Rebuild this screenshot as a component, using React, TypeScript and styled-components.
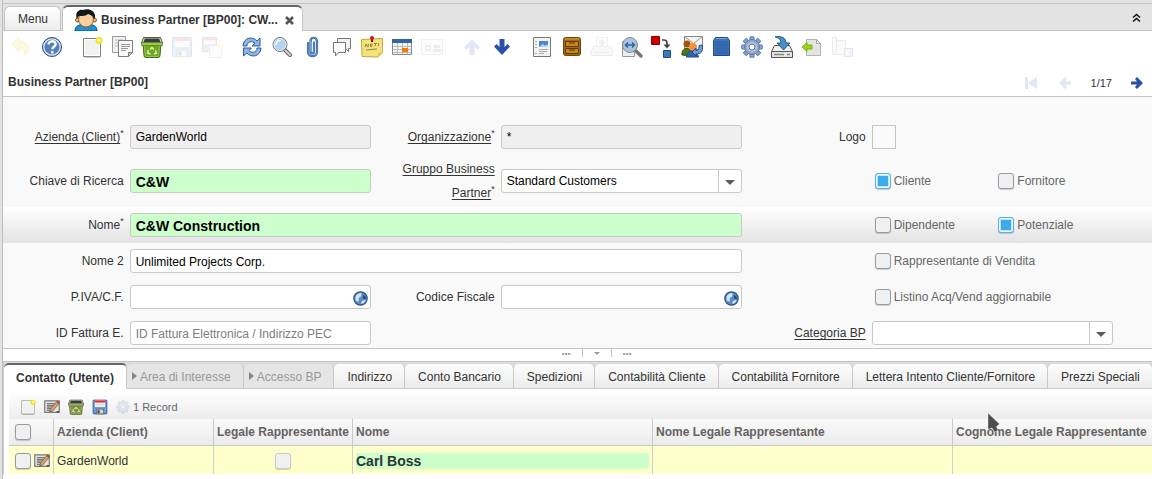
import React from "react";
import styled, { createGlobalStyle, css } from "styled-components";

const LINE = "#c4c4c4";
const FONT = '"Liberation Sans", Arial, Helvetica, sans-serif';

const GlobalStyle = createGlobalStyle`
  *, *::before, *::after { box-sizing: border-box; }
  body { margin: 0; background: #fff; overflow-x: hidden; }
  body, button, input, select, table { font-family: ${FONT}; font-size: 12px; color: #333; }
  button { border: 0; padding: 0; background: none; cursor: pointer; }
  svg { display: block; }
`;

/* ---------- page frame ---------- */

const Page = styled.div`
  display: flex;
  min-height: 100vh;
  overflow: hidden;
`;
const Gutter = styled.aside`
  flex: none;
  width: 3px;
  background: #e3e3e3;
  border-right: 1px solid #bdbdbd;
`;
const Main = styled.main`
  flex: 1;
  min-width: 0;
`;

/* ---------- window tabs ---------- */

const WindowBar = styled.header`
  border-top: 3px solid #e3e3e3;
  background: #e3e3e3;
`;
const WindowTabs = styled.nav`
  display: flex;
  align-items: flex-end;
  height: 28px;
  padding: 0 2px 0 1px;
  border-top: 1px solid ${LINE};
  border-bottom: 1px solid ${LINE};
`;
const WindowTab = styled.button<{ $active?: boolean }>`
  display: flex;
  align-items: center;
  border: 1px solid ${LINE};
  border-bottom: 0;
  border-radius: 6px 6px 0 0;
  white-space: nowrap;
  ${(p) =>
    p.$active
      ? css`
          height: 26px;
          margin-bottom: -1px;
          padding: 2px 8px 0 11px;
          border-top: 2px solid #666;
          background: #fff;
          font-weight: bold;
          gap: 3px;
        `
      : css`
          height: 24px;
          padding: 0 12px 0 13px;
          margin-right: 1px;
          background: linear-gradient(#fefefe, #ececec);
        `}
`;
const TabClose = styled.span`
  padding-left: 4px;
`;
const CollapseButton = styled.button`
  margin-left: auto;
  align-self: center;
  padding: 4px 9px;
`;

/* ---------- main toolbar ---------- */

const Toolbar = styled.div`
  display: flex;
  align-items: center;
  height: 32px;
  padding-left: 4px;
`;
const ToolGroup = styled.div`
  display: flex;
  margin-right: 10px;
`;
const ToolButton = styled.button`
  width: 30px;
  height: 30px;
  display: grid;
  place-items: center;
  &:disabled { opacity: 0.13; cursor: default; }
`;

const TitleRow = styled.div`
  display: flex;
  align-items: center;
  justify-content: space-between;
  height: 34px;
  padding: 4px 9px 0 5px;
  border-bottom: 1px solid ${LINE};
`;
const Title = styled.h1`
  margin: 0;
  font-size: 12px;
  line-height: 16px;
`;
const Pager = styled.div`
  display: flex;
  align-items: center;
  padding-top: 2px;
  font-size: 11px;
`;
const PagerButton = styled.button`
  padding: 0 11px;
  &:disabled { opacity: 0.13; }
  &:last-child { padding: 0 0 0 11px; }
`;
const PagerCount = styled.span`
  padding: 0 8px 0 9px;
`;

/* ---------- form ---------- */

const Form = styled.form`
  padding-top: 22px;
  background: #f9f9f9;
  border-bottom: 1px solid ${LINE};
`;
const FormRow = styled.div<{ $current?: boolean }>`
  display: grid;
  grid-template-columns: repeat(9, minmax(0, 1fr));
  align-items: center;
  min-height: 36px;
  padding: 2px 36px 2px 0;
  background: ${(p) => (p.$current ? "linear-gradient(#fff, #e3e3e3)" : "none")};
  &:last-child { min-height: 33px; padding: 6px 36px 3px 0; }
`;
const Cell = styled.div<{ $col: number; $span?: number }>`
  grid-column: ${(p) => p.$col} / span ${(p) => p.$span ?? 1};
  min-width: 0;
  padding: 0 3px;
`;
const FieldLabel = styled.label<{ $zoom?: boolean }>`
  display: block;
  text-align: right;
  line-height: 24px;
  & > span { text-decoration: ${(p) => (p.$zoom ? "underline" : "none")}; text-underline-offset: 2px; }
`;
const Required = styled.sup`
  font-size: 9px;
  line-height: 0;
`;
const boxed = css`
  display: block;
  width: 100%;
  height: 24px;
  border: 1px solid #c8c8c8;
  border-radius: 3px;
  background: #fff;
`;
const TextBox = styled.input<{ $key?: boolean }>`
  ${boxed}
  padding: 1px 5px 0;
  color: #000;
  outline: 0;
  &[readonly] { background: #efefef; padding-bottom: 1px; padding-top: 0; }
  &::placeholder { color: #7d7d7d; }
  ${(p) => p.$key && css`background: #ccffcc; font-size: 14px; font-weight: bold;`}
`;
const WithGlobe = styled.div`
  ${boxed}
  display: flex;
  align-items: center;
  padding: 2px 2px 0 0;
`;
const BareInput = styled.input`
  flex: 1;
  min-width: 0;
  border: 0;
  outline: 0;
  padding: 0 5px;
  background: none;
`;
const SelectWrap = styled.div`
  ${boxed}
  display: grid;
  grid-template-rows: 22px;
`;
const Select = styled.select`
  grid-area: 1 / 1;
  width: 100%;
  appearance: none;
  border: 0;
  outline: 0;
  padding: 0 28px 0 5px;
  background: none;
  color: #000;
`;
const SelectArrow = styled.span`
  grid-area: 1 / 1;
  justify-self: end;
  width: 23px;
  padding-top: 2px;
  border-left: 1px solid #c8c8c8;
  display: grid;
  place-items: center;
  pointer-events: none;
`;
const LogoButton = styled.button`
  display: block;
  width: 24px;
  height: 24px;
  border: 1px solid #c4c4c4;
`;
const CheckLabel = styled.label`
  display: flex;
  align-items: center;
  gap: 3px;
  padding-left: 3px;
  color: #666;
  white-space: nowrap;
`;
const CheckBox = styled.input<{ $faint?: boolean }>`
  appearance: none;
  flex: none;
  display: block;
  width: 16px;
  height: 16px;
  margin: 0;
  border: 1px solid ${(p) => (p.$faint ? "#c9c9cc" : "#999a9e")};
  border-radius: 3px;
  background: #eef0f2;
  box-shadow: 0 1px 1px rgba(0, 0, 0, 0.18);
  &:checked {
    border-color: #4fb3ea;
    background: #3cabea;
    box-shadow: inset 0 0 0 1px #f4fafe, inset 0 0 0 2px #c3e4f7, 0 1px 1px rgba(0, 0, 0, 0.18);
  }
`;

/* ---------- splitter and detail ---------- */

const Splitter = styled.div`
  display: flex;
  justify-content: center;
  height: 13px;
  padding-left: 39px;
  border-bottom: 1px solid ${LINE};
`;
const Grip = styled.span`
  width: 9px;
  height: 2px;
  margin: 4px 11px;
  background: repeating-linear-gradient(90deg, #aaa 0 2px, #ddd 2px 3px);
`;
const SplitButton = styled.button`
  width: 30px;
  height: 8px;
  border: solid #c4c4c4;
  border-width: 0 1px;
  display: grid;
  place-items: center;
`;
const Detail = styled.section`
  border-left: 1px solid #ccc;
`;
const DetailTabs = styled.nav`
  display: flex;
  align-items: flex-end;
  height: 27px;
  background: #dcdcdc;
  border-bottom: 1px solid #c8c8c8;
`;
const DetailTab = styled.button<{ $active?: boolean }>`
  flex: none;
  display: flex;
  align-items: center;
  gap: 3px;
  height: 24px;
  padding: 2px 12px 0 13px;
  border: 1px solid #c8c8c8;
  border-width: 0 1px 0 0;
  border-radius: 5px 5px 0 0;
  background: linear-gradient(#fdfdfd, #ececec);
  white-space: nowrap;
  &:disabled { background: #e5e5e5; color: #999; padding-left: 5px; }
  ${(p) =>
    p.$active &&
    css`
      height: 26px;
      margin-bottom: -1px;
      padding: 2px 12px 0;
      border-top: 2px solid #666;
      background: #fff;
      font-weight: bold;
    `}
`;
const Records = styled.div`
  padding: 3px 0 0 5px;
`;
const RecordBar = styled.div`
  display: flex;
  align-items: center;
  height: 27px;
  padding: 2px 0 0 7px;
  background: linear-gradient(#fff, #ececec);
  color: #666;
  font-size: 11px;
`;
const SmallTool = styled.button`
  width: 24px;
  height: 24px;
  display: grid;
  place-items: center;
  &:disabled { opacity: 0.22; width: 21px; }
`;
const RecordTable = styled.table`
  width: 100%;
  table-layout: fixed;
  border-collapse: separate;
  border-spacing: 0;
`;
const HeadCell = styled.th`
  position: relative;
  height: 27px;
  padding: 0 3px;
  border: solid #c8c8cc;
  border-width: 0 1px 1px 0;
  background: linear-gradient(#fafafa, #ebebeb);
  color: #636363;
  text-align: left;
  white-space: nowrap;
  &:last-child { border-right: 0; }
`;
const DataCell = styled.td`
  height: 28px;
  padding: 1px 3px 0;
  border-right: 1px solid #cfcfcf;
  background: #ffffcc;
  &:last-child { border-right: 0; }
`;
const CellTools = styled.div<{ $center?: boolean }>`
  display: flex;
  align-items: center;
  gap: 3px;
  padding-left: ${(p) => (p.$center ? "0" : "3px")};
  justify-content: ${(p) => (p.$center ? "center" : "flex-start")};
`;
const KeyValue = styled.div`
  background: #ccffcc;
  font-size: 14px;
  line-height: 16px;
  font-weight: bold;
`;
const Pointer = styled.svg`
  position: absolute;
  left: 34px;
  top: -7px;
  z-index: 1;
`;

/* ---------- icons ---------- */

const Icon = ({ children, size = 22 }: { children: React.ReactNode; size?: number }) => (
  <svg width={size} height={size} viewBox="0 0 22 22" fill="none" aria-hidden="true">
    {children}
  </svg>
);

const GEAR = Array.from({ length: 8 }, (_, i) => i * 45);

const drawBin = (body: string, edge: string, band: string) => (
  <>
    <path d="M2 7h18l-1 12.500q0 2-2 2H5q-2 0-2-2Z" fill={body} stroke={edge} />
    <path d="M3.500 9h15l-.8 10.500q0 1-1 1H5.300q-1 0-1-1Z" stroke="#fff" strokeOpacity=".3" />
    <path d="M2.500 1.500h17l2 5.500H.5Z" fill="#d8dad4" stroke="#555" />
    <path d="M3.800 2.500h14.400l1.300 3.500h-17Z" fill="#3a3d3a" />
    <path d="M.5 6.500h21v3H.5Z" fill={band} stroke={edge} strokeWidth=".6" />
    <path d="m9 13.500 2-2 2 2M14.500 14.500l1 2.500-2.500 1M7.500 14 6.500 17l3 1" stroke="#e2f2c4" strokeWidth="1.400" />
  </>
);

const icons = {
  undo: (
    <path d="M1 8 8 1v4c7 0 10 4 9 9-.5 3-2 5-4 6 1-4 1-8-5-8v4Z" fill="#edd400" stroke="#c4a000" />
  ),
  help: (
    <>
      <circle cx="11" cy="11" r="9.500" fill="#5681b8" stroke="#28508a" />
      <circle cx="11" cy="11" r="8.200" stroke="#e6eef8" strokeWidth="1.200" />
      <path d="M7.600 8.600c0-4.400 7-4.200 7-.4 0 2.500-3.300 2.500-3.300 5M11.300 15v2.400" stroke="#fff" strokeWidth="2.400" />
    </>
  ),
  newDoc: (
    <>
      <path d="M2.500 2.500h17v18h-17Z" fill="#f1f1f1" stroke="#7d7f7a" />
      <path d="M3.500 3.500h15v16h-15Z" stroke="#fff" />
      <path d="M4 21h15" stroke="#999" />
      <circle cx="18" cy="4.500" r="3.500" fill="#f2e230" />
      <circle cx="18" cy="4.500" r="1.400" fill="#fffbc8" />
    </>
  ),
  copy: (
    <>
      <path d="M1.500.500h13v16h-13Z" fill="#f1f1f1" stroke="#9a9c97" />
      <path d="M4 4h8M4 7h4M4 10h4" stroke="#bbb" />
      <path d="M7.500 4.500h14v12l-4 4h-10Z" fill="#fafafa" stroke="#7d7f7a" />
      <path d="M10 8.500h9M10 10.500h9M10 12.500h7M10 14.500h5" stroke="#999" />
      <path d="m21.500 16.500-4 4v-4Z" fill="#ccc" stroke="#7d7f7a" />
    </>
  ),
  bin: drawBin("#6fa81c", "#3c6c0c", "#9ccc4a"),
  binMuted: drawBin("#7f9440", "#4c5a24", "#a3b468"),
  save: (
    <>
      <path d="M1.500 2.500q0-1 1-1h17q1 0 1 1v17q0 1-1 1h-17q-1 0-1-1Z" fill="#6d9dd8" stroke="#204a87" />
      <path d="M4 2h14v9H4Z" fill="#fff" />
      <path d="M4 2h14v3H4Z" fill="#ef2929" />
      <path d="M5 7.500h12M5 9.500h12" stroke="#ccc" />
      <path d="M6 14h10v6.500H6Z" fill="#d3d7cf" stroke="#555" />
      <path d="M7.500 15.500h3v4h-3Z" fill="#444" />
    </>
  ),
  saveNew: (
    <>
      <path d="M1.500 1.500h14v14h-14Z" fill="#6d9dd8" stroke="#204a87" />
      <path d="M3 2h11v6H3Z" fill="#fff" />
      <path d="M3 2h11v2.500H3Z" fill="#ef2929" />
      <path d="M8.500 9.500h12v12h-12Z" fill="#eee" stroke="#888" />
      <circle cx="19" cy="11" r="3" fill="#f4e642" />
    </>
  ),
  refresh: (
    <>
      <path d="M2 10c.5-9 10-10 14-5l3-3v8h-8l3-2.600C11 4 6 6 6 10Z" fill="#8db4e3" stroke="#2f5f9f" />
      <path d="M20 12c-.5 9-10 10-14 5l-3.500 3v-8h8L8 14.600c3 3.400 8 1.400 8-2.600Z" fill="#8db4e3" stroke="#2f5f9f" />
    </>
  ),
  find: (
    <>
      <path d="m14 14 5 5" stroke="#666" strokeWidth="4" strokeLinecap="round" />
      <path d="m14.500 14.500 4.500 4.500" stroke="#d3d3d3" strokeWidth="2" strokeLinecap="round" />
      <circle cx="9" cy="8.500" r="7" fill="#b5d3f3" stroke="#777" />
      <circle cx="9" cy="8.500" r="6" stroke="#dde6ee" />
      <path d="M5 9q0-4.500 5-5" stroke="#fff" strokeWidth="1.500" />
    </>
  ),
  attach: (
    <>
      <path
        d="M7 7v9c0 5.500 9 5.500 9 0V5.500c0-5-6.500-5-6.500 0v10c0 2.500 3.500 2.500 3.500 0V6.500"
        stroke="#2f5f9f"
        strokeWidth="2.200"
        strokeLinecap="round"
      />
      <path
        d="M7 7v9c0 5.500 9 5.500 9 0V5.500c0-5-6.500-5-6.500 0v10c0 2.500 3.500 2.500 3.500 0V6.500"
        stroke="#7fa8da"
        strokeWidth=".8"
        strokeLinecap="round"
      />
    </>
  ),
  chat: (
    <>
      <path d="M6.500 2.500h13v10h-2v3l-3-3h-8Z" fill="#f2f2f2" stroke="#777" />
      <path d="M2.500 6.500h12v10h-7l-3 3.500v-3.500h-2Z" fill="#fafafa" stroke="#777" />
    </>
  ),
  note: (
    <>
      <path d="m.5 3.500 21-1 .2 14-4.700 4.500-16-.5Z" fill="#f5e27a" stroke="#c0a93a" />
      <path d="m17 21 .5-4 4-.5Z" fill="#dcc254" />
      <path d="m4 11 1-3 2 3 .500-3M9.500 8v2.500h1.500V8ZM13 7.500h3M14.500 7.500V10M17.500 7v3M5 14l11-1" stroke="#8b7d40" strokeWidth=".9" />
      <path d="M11 1v5" stroke="#a40000" strokeWidth="2" />
      <circle cx="11" cy="2" r="2" fill="#cc1020" />
    </>
  ),
  grid: (
    <>
      <path d="M1.500 3.500h19v15h-19Z" fill="#f4f4f2" stroke="#888a85" />
      <path d="M1 3h20v4H1Z" fill="#3465a4" />
      <path d="M2 10.500h18M2 13.500h18M2 16.500h18M6.500 7v11M11.500 7v11M16.500 7v11" stroke="#babdb6" />
      <path d="M11 12h6v4h-6Z" fill="#f57900" />
    </>
  ),
  history: (
    <>
      <path d="M.5 3.500h21v15H.5Z" fill="#eee" stroke="#888" />
      <path d="M4 9h6v6H4ZM13 9h6v3h-6ZM12 13h8v3h-8Z" fill="#777" />
      <path d="M5 11h4v2H5Z" fill="#fff" />
    </>
  ),
  up: <path d="m11 3 8 8.500-2.500 2.500-3-3v8h-5v-8l-3 3L3 11.500Z" fill="#2b50a8" />,
  down: <path d="m11 19 8-8.500L16.500 8l-3 3V3h-5v8l-3-3L3 10.500Z" fill="#2b50a8" />,
  report: (
    <>
      <path d="M2.500 1.500h17v19h-17Z" fill="#f2f2f0" stroke="#777" />
      <path d="M8 5h9v6H8Z" fill="#4a86cf" />
      <path d="m8 11 4-3 2 1.500 3-1V11Z" fill="#b6d1ee" />
      <path d="M4 5.500h2M4 8.500h2M4 11.500h2M8 13.500h9M8 15.500h8M8 17.500h5M4 17.500h2" stroke="#aaa" />
    </>
  ),
  archive: (
    <>
      <rect x="2.500" y="1.500" width="17" height="18" rx="2" fill="#a8690c" stroke="#6b470a" />
      <path d="M4.500 5.500h13v5h-13ZM4.500 12.500h13v5h-13Z" fill="#c98618" stroke="#5a3a06" />
      <path d="M8 7h6M8 14h6" stroke="#5a3a06" strokeWidth="1.200" />
      <path d="M4 3h14" stroke="#d9a14a" />
    </>
  ),
  print: (
    <>
      <path d="M5.500 11V1.500h11V11" fill="#fff" stroke="#888" />
      <path d="M2.500 10.500h17l2 4v5h-21v-5Z" fill="#ccc" stroke="#777" />
      <path d="m11 3 4 4h-2.500v4h-3V7H7Z" fill="#888" />
      <path d="M4 16.500h14" stroke="#777" />
    </>
  ),
  zoomAcross: (
    <>
      <path d="M1.500 5.500h12v15h-12Z" fill="#eee" stroke="#999" />
      <path d="m15 15 5 5" stroke="#777" strokeWidth="3.500" strokeLinecap="round" />
      <circle cx="9" cy="9" r="7.500" fill="#a9c4de" stroke="#888" />
      <path d="M4.500 9h9M7 6.500 4.500 9 7 11.500M11 6.500 13.500 9 11 11.500" stroke="#3465a4" strokeWidth="1.500" />
    </>
  ),
  workflow: (
    <>
      <path d="M.5.500h8v8h-8Z" fill="#cc0000" stroke="#8a0000" />
      <path d="M12.500 14.500h7v7h-7Z" fill="#3c78be" stroke="#204a87" />
      <path d="M11 4h2c2 0 3 1 3 3v2" stroke="#444" strokeWidth="1.700" />
      <path d="M12.500 8.500h7L16 12.500Z" fill="#444" />
    </>
  ),
  request: (
    <>
      <path d="M3.500.500h18v13h-18Z" fill="#f4f4f2" stroke="#888" />
      <path d="m3.500.500 9 7 9-7" stroke="#999" />
      <circle cx="6" cy="8" r="3.500" fill="#a3570e" />
      <path d="M1 19c-1-8 9-9 9-2v3Z" fill="#4e7a1a" stroke="#30500c" />
      <circle cx="12" cy="11" r="4" fill="#f0933a" />
      <path d="M5.500 21c0-8 10-8 12 0Z" fill="#3465a4" stroke="#204a87" />
      <path d="m11 16 4-4v2.500c3 0 3-2 3-5l3.500-.5c.5 7-1.500 9-6.500 9V20Z" fill="#6d9dd8" stroke="#204a87" />
    </>
  ),
  product: (
    <>
      <path d="M4.500 1.500h12l2 3v15h-16v-15Z" fill="#3f74b8" stroke="#204a87" />
      <path d="M4 5h13v13.500H4Z" fill="#3468ae" />
      <path d="M5 2.500h11" stroke="#7fa8da" />
    </>
  ),
  gear: (
    <>
      {GEAR.map((a) => (
        <path key={a} d="M9 4V.800h4V4Z" fill="#8fa8d2" stroke="#5f7cae" transform={`rotate(${a} 11 11)`} />
      ))}
      <circle cx="11" cy="11" r="7.500" fill="#8fa8d2" stroke="#5f7cae" />
      <circle cx="11" cy="11" r="5" fill="#b3c2de" />
      <circle cx="11" cy="11" r="3" fill="#fff" stroke="#5f7cae" />
    </>
  ),
  exportDisk: (
    <>
      <path d="M3.500 9.500h15l3 6v6H.5v-6Z" fill="#f0f0ee" stroke="#555" />
      <path d="M.5 15.500h21v6H.5Z" fill="#e4e4e2" stroke="#555" />
      <path d="M3 18.500h10M16 18.500h3" stroke="#888" strokeWidth="1.500" />
      <path d="M4 .800c8-1 11 2 11 6.200h4l-6.500 7L6 7h4C10 4 8 2 4 .800Z" fill="#4a90c8" stroke="#1f5a8a" />
    </>
  ),
  importFile: (
    <>
      <path d="M5.500 3.500h10l4 4v12h-14Z" fill="#e4e4e2" stroke="#b4b4b2" />
      <path d="M19.500 7.500h-4v-4Z" fill="#fff" stroke="#aaa" />
      <path d="m1 11 5-4.500V9h5v4H6v2.500Z" fill="#9ad51c" stroke="#76b40c" />
    </>
  ),
  csv: (
    <>
      <path d="M1.500 1.500h4v17h-4ZM5.500 4.500h9v14h-9Z" fill="#ddd" stroke="#777" />
      <path d="M13.500 12.500h8v8h-8Z" fill="#7fa8da" stroke="#204a87" />
      <path d="M19 14.500h-3v4h3" stroke="#fff" strokeWidth="1.500" />
    </>
  ),
  edit: (
    <>
      <path d="M1 2.500h20v16H1Z" fill="#e4e4e4" stroke="#777" strokeWidth="1.600" />
      <path d="M4 6.500h11M4 9.500h9M4 12.500h6M4 15.500h5" stroke="#555" strokeWidth="1.500" />
      <path d="m8 18 1-4L17 4l3.500 2.500L12 16.500Z" fill="#d9a066" stroke="#7a5a34" />
      <path d="m17 4 1.500-2L22 4.500l-1.500 2Z" fill="#b04a40" />
      <path d="M19 16.500v2" stroke="#444" strokeWidth="3" />
    </>
  ),
};

type IconName = keyof typeof icons;

const ArrowDown = () => (
  <svg width="10" height="5" viewBox="0 0 10 5" aria-hidden="true">
    <path d="M0 0h10L5 5Z" fill="#5c5c5c" />
  </svg>
);

const Globe = () => (
  <svg width="15" height="15" viewBox="0 0 15 15" aria-hidden="true">
    <circle cx="7.500" cy="7.500" r="6.700" fill="#5d8bc4" stroke="#2c5490" strokeWidth="1.200" />
    <path d="M2.500 6q1.500-4 6-4L8 5.500 5.500 7l.5 3-2 .5Q2 9 2.500 6ZM9 10l4-1.500-2 3.500L8 13Z" fill="#d6e6f6" />
    <path d="m10 4 2.500 1.500.5 3-3-1Z" fill="#1f4a86" />
  </svg>
);

const PersonIcon = () => (
  <svg width="24" height="22" viewBox="0 0 24 22" aria-hidden="true">
    <path d="M1 22c0-5 4-7 11-7s11 2 11 7Z" fill="#1f8fd6" stroke="#0b4f86" />
    <path d="M9 14h6l-3 5Z" fill="#f5b97a" />
    <circle cx="3.500" cy="11" r="2" fill="#f5b97a" stroke="#8a5a2a" />
    <circle cx="20.500" cy="11" r="2" fill="#f5b97a" stroke="#8a5a2a" />
    <ellipse cx="12" cy="10.500" rx="7.500" ry="7.500" fill="#fbd09c" stroke="#8a5a2a" />
    <path d="M3 10C0 3 6 0 9 1c4-2 13-1 12 8l-1 1c-1-4-4-4-6-5-2 2-6 2-8 2-2 0-2 1-3 3Z" fill="#101820" />
  </svg>
);

/* ---------- data ---------- */

type Tool = [IconName, string, boolean?];

const toolGroups: Tool[][] = [
  [["undo", "Annulla", true], ["help", "Aiuto"]],
  [["newDoc", "Nuovo"], ["copy", "Copia"], ["bin", "Elimina"], ["save", "Salva", true], ["saveNew", "Salva e nuovo", true]],
  [
    ["refresh", "Aggiorna"],
    ["find", "Cerca"],
    ["attach", "Allegato"],
    ["chat", "Chat"],
    ["note", "Nota"],
    ["grid", "Griglia"],
    ["history", "Storico", true],
  ],
  [["up", "Record padre", true], ["down", "Dettaglio"]],
  [
    ["report", "Report"],
    ["archive", "Archivio"],
    ["print", "Stampa", true],
    ["zoomAcross", "Zoom"],
    ["workflow", "Workflow"],
    ["request", "Richieste"],
    ["product", "Prodotto"],
    ["gear", "Processo"],
    ["exportDisk", "Esporta"],
    ["importFile", "Importa"],
    ["csv", "CSV", true],
  ],
];

const detailTabs = [
  { name: "Contatto (Utente)", active: true },
  { name: "Area di Interesse", disabled: true },
  { name: "Accesso BP", disabled: true },
  { name: "Indirizzo" },
  { name: "Conto Bancario" },
  { name: "Spedizioni" },
  { name: "Contabilità Cliente" },
  { name: "Contabilità Fornitore" },
  { name: "Lettera Intento Cliente/Fornitore" },
  { name: "Prezzi Speciali" },
];

/* ---------- form parts ---------- */

interface LabelProps {
  col: number;
  id: string;
  text: string;
  zoom?: boolean;
  required?: boolean;
}

const LabelCell = ({ col, id, text, zoom, required }: LabelProps) => (
  <Cell $col={col}>
    <FieldLabel htmlFor={id} $zoom={zoom}>
      <span>{text}</span>
      {required && <Required>*</Required>}
    </FieldLabel>
  </Cell>
);

const Check = ({ col, text, checked }: { col: number; text: string; checked?: boolean }) => (
  <Cell $col={col}>
    <CheckLabel>
      <CheckBox type="checkbox" defaultChecked={checked} />
      {text}
    </CheckLabel>
  </Cell>
);

const GlobeField = ({ id, col }: { id: string; col: number }) => (
  <Cell $col={col} $span={2}>
    <WithGlobe>
      <BareInput id={id} />
      <button type="button" aria-label="Verifica">
        <Globe />
      </button>
    </WithGlobe>
  </Cell>
);

const Dropdown = ({ id, col, value }: { id: string; col: number; value: string }) => (
  <Cell $col={col} $span={2}>
    <SelectWrap>
      <Select id={id} defaultValue={value}>
        <option>{value}</option>
      </Select>
      <SelectArrow>
        <ArrowDown />
      </SelectArrow>
    </SelectWrap>
  </Cell>
);

export default function App() {
  return (
    <Page>
      <GlobalStyle />
      <Gutter />
      <Main>
        <WindowBar>
          <WindowTabs>
            <WindowTab>Menu</WindowTab>
            <WindowTab $active>
              <PersonIcon />
              Business Partner [BP00]: CW...
              <TabClose>
                <svg width="9" height="9" viewBox="0 0 9 9" aria-hidden="true">
                  <path d="m1 1 7 7M8 1 1 8" stroke="#555" strokeWidth="2.600" />
                </svg>
              </TabClose>
            </WindowTab>
            <CollapseButton aria-label="Comprimi">
              <svg width="9" height="9" viewBox="0 0 9 9" fill="none" aria-hidden="true">
                <path d="m1 4.500 3.500-3 3.500 3M1 8.500l3.500-3 3.500 3" stroke="#111" strokeWidth="1.500" />
              </svg>
            </CollapseButton>
          </WindowTabs>
        </WindowBar>

        <Toolbar>
          {toolGroups.map((group, i) => (
            <ToolGroup key={i}>
              {group.map(([name, label, disabled]) => (
                <ToolButton key={name} aria-label={label} disabled={disabled}>
                  <Icon>{icons[name]}</Icon>
                </ToolButton>
              ))}
            </ToolGroup>
          ))}
        </Toolbar>

        <TitleRow>
          <Title>Business Partner [BP00]</Title>
          <Pager>
            <PagerButton disabled aria-label="Primo">
              <svg width="12" height="12" viewBox="0 0 12 12">
                <path d="M0 0h3v12H0ZM12 0v12L3 6Z" fill="#2b50a8" />
              </svg>
            </PagerButton>
            <PagerButton disabled aria-label="Precedente">
              <svg width="12" height="12" viewBox="0 0 12 12">
                <path d="m0 6 6-6 2 2-2 2.500h6v3H6L8 10l-2 2Z" fill="#2b50a8" />
              </svg>
            </PagerButton>
            <PagerCount>1/17</PagerCount>
            <PagerButton aria-label="Successivo">
              <svg width="12" height="12" viewBox="0 0 12 12">
                <path d="M12 6 6 0 4 2l2 2.500H0v3h6L4 10l2 2Z" fill="#2b50a8" />
              </svg>
            </PagerButton>
          </Pager>
        </TitleRow>

        <Form>
          <FormRow>
            <LabelCell col={1} id="client" text="Azienda (Client)" zoom required />
            <Cell $col={2} $span={2}>
              <TextBox id="client" readOnly defaultValue="GardenWorld" />
            </Cell>
            <LabelCell col={4} id="org" text="Organizzazione" zoom required />
            <Cell $col={5} $span={2}>
              <TextBox id="org" readOnly defaultValue="*" />
            </Cell>
            <LabelCell col={7} id="logo" text="Logo" />
            <Cell $col={8}>
              <LogoButton id="logo" type="button" />
            </Cell>
          </FormRow>
          <FormRow>
            <LabelCell col={1} id="key" text="Chiave di Ricerca" />
            <Cell $col={2} $span={2}>
              <TextBox id="key" $key defaultValue="C&W" />
            </Cell>
            <LabelCell col={4} id="group" text="Gruppo Business Partner" zoom required />
            <Dropdown id="group" col={5} value="Standard Customers" />
            <Check col={8} text="Cliente" checked />
            <Check col={9} text="Fornitore" />
          </FormRow>
          <FormRow $current>
            <LabelCell col={1} id="name" text="Nome" required />
            <Cell $col={2} $span={5}>
              <TextBox id="name" $key defaultValue="C&W Construction" />
            </Cell>
            <Check col={8} text="Dipendente" />
            <Check col={9} text="Potenziale" checked />
          </FormRow>
          <FormRow>
            <LabelCell col={1} id="name2" text="Nome 2" />
            <Cell $col={2} $span={5}>
              <TextBox id="name2" defaultValue="Unlimited Projects Corp." />
            </Cell>
            <Check col={8} text="Rappresentante di Vendita" />
          </FormRow>
          <FormRow>
            <LabelCell col={1} id="vat" text="P.IVA/C.F." />
            <GlobeField id="vat" col={2} />
            <LabelCell col={4} id="tax" text="Codice Fiscale" />
            <GlobeField id="tax" col={5} />
            <Check col={8} text="Listino Acq/Vend aggiornabile" />
          </FormRow>
          <FormRow>
            <LabelCell col={1} id="invoice" text="ID Fattura E." />
            <Cell $col={2} $span={2}>
              <TextBox id="invoice" placeholder="ID Fattura Elettronica / Indirizzo PEC" />
            </Cell>
            <LabelCell col={7} id="category" text="Categoria BP" zoom />
            <Dropdown id="category" col={8} value="" />
          </FormRow>
        </Form>

        <Splitter>
          <Grip />
          <SplitButton aria-label="Chiudi dettaglio">
            <svg width="6" height="3" viewBox="0 0 6 3">
              <path d="M0 0h6L3 3Z" fill="#999" />
            </svg>
          </SplitButton>
          <Grip />
        </Splitter>

        <Detail>
          <DetailTabs>
            {detailTabs.map((tab) => (
              <DetailTab key={tab.name} $active={tab.active} disabled={tab.disabled}>
                {tab.disabled && (
                  <svg width="5" height="10" viewBox="0 0 5 10" aria-hidden="true">
                    <path d="M0 0v8l5-4Z" fill="#888" />
                  </svg>
                )}
                {tab.name}
              </DetailTab>
            ))}
          </DetailTabs>
          <Records>
            <RecordBar>
              <SmallTool aria-label="Nuovo">
                <Icon size={16}>{icons.newDoc}</Icon>
              </SmallTool>
              <SmallTool aria-label="Modifica">
                <Icon size={16}>{icons.edit}</Icon>
              </SmallTool>
              <SmallTool aria-label="Elimina">
                <Icon size={16}>{icons.binMuted}</Icon>
              </SmallTool>
              <SmallTool aria-label="Salva">
                <Icon size={16}>{icons.save}</Icon>
              </SmallTool>
              <SmallTool aria-label="Processo" disabled>
                <Icon size={14}>{icons.gear}</Icon>
              </SmallTool>
              <span>1 Record</span>
            </RecordBar>
            <RecordTable>
              <colgroup>
                <col width="45" />
                <col width="160" />
                <col width="139" />
                <col width="300" />
                <col width="300" />
                <col />
              </colgroup>
              <thead>
                <tr>
                  <HeadCell>
                    <CellTools>
                      <CheckBox type="checkbox" aria-label="Seleziona tutto" />
                    </CellTools>
                  </HeadCell>
                  <HeadCell>Azienda (Client)</HeadCell>
                  <HeadCell>Legale Rappresentante</HeadCell>
                  <HeadCell>Nome</HeadCell>
                  <HeadCell>Nome Legale Rappresentante</HeadCell>
                  <HeadCell>
                    Cognome Legale Rappresentante
                    <Pointer width="13" height="21" viewBox="-1 -1 13 21" aria-hidden="true">
                      <path d="M0 0v16.500l4-1.500 2.500 4 3.500-1.500-1.500-4 3-2.500Z" fill="#4d4d4d" stroke="#fff" strokeWidth=".4" />
                    </Pointer>
                  </HeadCell>
                </tr>
              </thead>
              <tbody>
                <tr>
                  <DataCell>
                    <CellTools>
                      <CheckBox type="checkbox" aria-label="Seleziona riga" />
                      <button aria-label="Modifica riga">
                        <Icon size={16}>{icons.edit}</Icon>
                      </button>
                    </CellTools>
                  </DataCell>
                  <DataCell>GardenWorld</DataCell>
                  <DataCell>
                    <CellTools $center>
                      <CheckBox type="checkbox" $faint aria-label="Legale Rappresentante" />
                    </CellTools>
                  </DataCell>
                  <DataCell>
                    <KeyValue>Carl Boss</KeyValue>
                  </DataCell>
                  <DataCell />
                  <DataCell />
                </tr>
              </tbody>
            </RecordTable>
          </Records>
        </Detail>
      </Main>
    </Page>
  );
}
